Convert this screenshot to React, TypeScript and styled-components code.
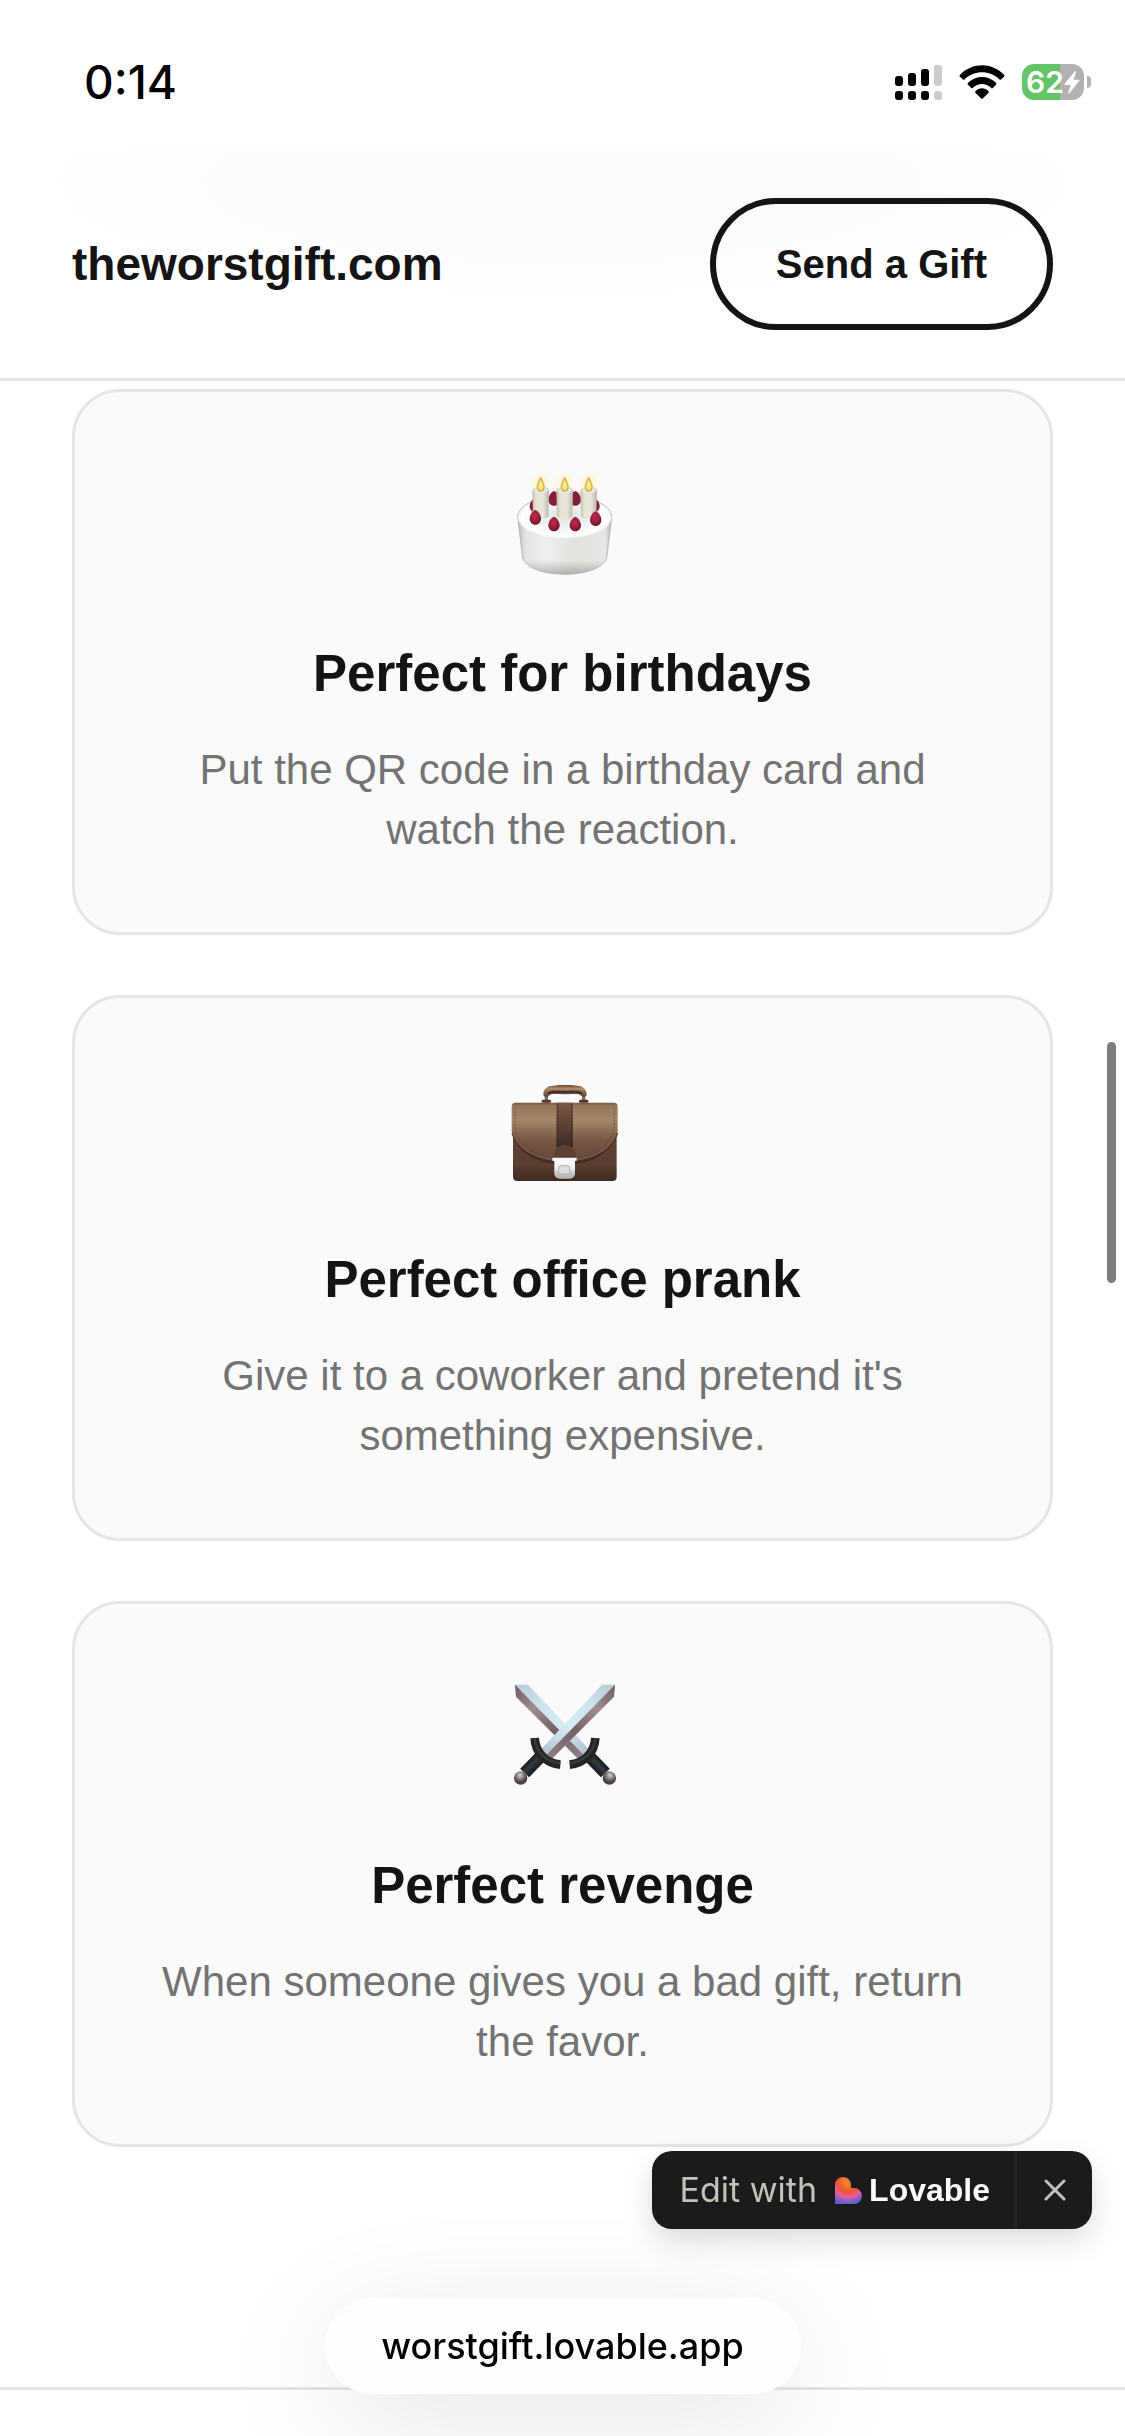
import React from "react";
import styled, { createGlobalStyle } from "styled-components";

const sans = `"Liberation Sans", Arial, Helvetica, sans-serif`;
const system = `Inter, Roboto, sans-serif`;

const GlobalStyle = createGlobalStyle`
  *, *::before, *::after { box-sizing: border-box; }
  body { margin: 0; background: #fff; color: #141414; font-family: ${sans}; }
  h2, p { margin: 0; }
`;

const Page = styled.div`
  display: flex;
  flex-direction: column;
  min-height: 100vh;
`;

const StatusBar = styled.div`
  display: flex;
  align-items: center;
  justify-content: space-between;
  height: 150px;
  padding: 14px 34px 0 84px;
  color: #000;
  font-family: ${system};
`;

const Clock = styled.time`
  font-size: 46px;
  font-weight: 500;
  line-height: 48px;
`;

const StatusIcons = styled.div`
  display: flex;
  align-items: center;
  gap: 17px;
`;

const Battery = styled.div`
  display: flex;
  align-items: center;
  gap: 3px;
`;

const BatteryBody = styled.div<{ $level: number }>`
  display: flex;
  align-items: center;
  justify-content: center;
  width: 62px;
  height: 36px;
  border-radius: 12px;
  color: #fff;
  font-size: 30px;
  font-weight: 600;
  line-height: 36px;
  background: linear-gradient(
    to right,
    #65c466 ${(p) => p.$level}%,
    #b2b2b2 ${(p) => p.$level}%
  );
`;

const BatteryNub = styled.span`
  width: 4px;
  height: 12px;
  border-radius: 0 6px 6px 0;
  background: #b2b2b2;
`;

const Header = styled.header`
  display: flex;
  align-items: center;
  justify-content: space-between;
  padding: 48px 72px;
  border-bottom: 3px solid #e5e5e5;
  background: radial-gradient(ellipse 48% 52% at 50% 15%, #fcfcfc 60%, #fff 100%);
`;

const Brand = styled.a`
  color: #141414;
  font-size: 46px;
  font-weight: 700;
  line-height: 72px;
  text-decoration: none;
`;

const SendButton = styled.button`
  padding: 30px 60px;
  border: 6px solid #141414;
  border-radius: 66px;
  background: transparent;
  color: #141414;
  font-family: ${sans};
  font-size: 40px;
  font-weight: 700;
  line-height: 60px;
`;

const CardList = styled.main`
  display: flex;
  flex-direction: column;
  gap: 60px;
  padding: 8px 72px 240px;
`;

const Card = styled.article`
  display: flex;
  flex-direction: column;
  align-items: center;
  padding: 72px;
  border: 3px solid #e5e5e5;
  border-radius: 48px;
  background: #fafafa;
  text-align: center;
`;

const CardIcon = styled.svg`
  width: 120px;
  height: 120px;
  margin-bottom: 48px;
`;

const CardTitle = styled.h2`
  margin-bottom: 24px;
  font-size: 51px;
  font-weight: 700;
  line-height: 84px;
`;

const CardText = styled.p`
  max-width: 831px;
  color: #737373;
  font-size: 42px;
  line-height: 60px;
`;

const NextSection = styled.section`
  flex: 1;
  min-height: 49px;
  border-top: 3px solid #e5e5e5;
`;

const ScrollThumb = styled.div`
  position: fixed;
  top: 1042px;
  right: 9px;
  width: 9px;
  height: 241px;
  border-radius: 5px;
  background: #7d7d7d;
`;

const EditBadge = styled.aside`
  position: fixed;
  right: 33px;
  bottom: 207px;
  display: flex;
  height: 78px;
  border-radius: 20px;
  background: #1b1b1b;
  box-shadow: 0 12px 30px rgba(0, 0, 0, 0.14);
  font-family: ${system};
`;

const EditLink = styled.a`
  display: flex;
  align-items: center;
  padding: 0 24px 0 28px;
  color: #c5c1ba;
  font-size: 34px;
  line-height: 48px;
  text-decoration: none;
`;

const LovableMark = styled.svg`
  width: 27px;
  height: 27px;
  margin: 0 7px 0 18px;
`;

const LovableName = styled.strong`
  color: #fcfbf8;
  font-size: 32px;
  font-weight: 700;
  font-family: ${sans};
`;

const CloseButton = styled.button`
  display: flex;
  align-items: center;
  justify-content: center;
  width: 78px;
  padding: 0;
  border: 0;
  border-left: 3px solid #242424;
  background: transparent;
  color: #c5c1ba;
`;

const AddressPill = styled.button`
  position: fixed;
  bottom: 42px;
  left: 50%;
  width: 476px;
  height: 96px;
  margin-left: -238px;
  padding: 0;
  border: 0;
  border-radius: 48px;
  background: #fefefd;
  box-shadow: 0 24px 120px rgba(0, 0, 0, 0.11);
  color: #000;
  font-family: ${system};
  font-size: 36px;
  font-weight: 500;
  line-height: 48px;
`;

const Signal = () => (
  <svg width="47" height="35" viewBox="0 0 47 35" aria-hidden="true">
    <rect x="0" y="11" width="8" height="10" rx="3" />
    <rect x="13" y="8" width="8" height="13" rx="3" />
    <rect x="26" y="4" width="8" height="17" rx="3" />
    <rect x="39" y="0" width="8" height="21" rx="3" fill="#ccc" />
    <rect x="0" y="26" width="8" height="9" rx="3" />
    <rect x="13" y="26" width="8" height="9" rx="3" />
    <rect x="26" y="26" width="8" height="9" rx="3" />
    <rect x="39" y="26" width="8" height="9" rx="3" fill="#ccc" />
  </svg>
);

const Wifi = () => (
  <svg width="46" height="34" viewBox="0 0 138 102" aria-hidden="true">
    <path d="M3 29C40-9 98-9 135 29q3 3 0 6l-8 8q-3 3-6 0C92 15 46 15 17 43q-3 3-6 0l-8-8q-3-3 0-6Z" />
    <path d="M27 53c24-23 60-23 84 0q3 3 0 6l-9 9q-3 3-6 0c-15-15-39-15-54 0q-3 3-6 0l-9-9q-3-3 0-6Z" />
    <path d="M50 78c11-11 27-11 38 0q3 3 0 6L72 100q-3 3-6 0L50 84q-3-3 0-6Z" />
  </svg>
);

const Bolt = () => (
  <svg width="16" height="23" viewBox="0 0 45 66" aria-hidden="true">
    <path d="M31 1 2 36q-3 4 2 4h15l-7 22q-1 5 3 2l28-35q3-4-2-4H27l7-21q0-5-3-3Z" fill="#fff" />
  </svg>
);

const berry = (x: number, y: number, dark = false) => (
  <path
    key={`${x}-${y}`}
    d={`M${x} ${y - 22}c9 3 17 16 17 26s-7 18-17 18-17-8-17-18 8-23 17-26Z`}
    fill={dark ? "#831e36" : "url(#berry)"}
  />
);

const Cake = () => (
  <CardIcon viewBox="38 42 360 360" role="img" aria-label="Birthday cake">
    <defs>
      <linearGradient id="cakeSide">
        <stop offset="0" stopColor="#b9b8b5" />
        <stop offset=".08" stopColor="#e5e4e2" />
        <stop offset=".3" stopColor="#efeeed" />
        <stop offset=".6" stopColor="#e3e2df" />
        <stop offset=".93" stopColor="#e8e7e5" />
        <stop offset="1" stopColor="#b5b3b0" />
      </linearGradient>
      <linearGradient id="cakeShade" x2="0" y2="1">
        <stop offset=".75" stopColor="#8c8984" stopOpacity="0" />
        <stop offset="1" stopColor="#8c8984" stopOpacity=".55" />
      </linearGradient>
      <radialGradient id="cakeTop">
        <stop offset="0" stopColor="#dfe2e5" />
        <stop offset=".6" stopColor="#f2f3f4" />
        <stop offset=".9" stopColor="#fff" />
        <stop offset="1" stopColor="#f4f3f2" />
      </radialGradient>
      <linearGradient id="candle">
        <stop offset="0" stopColor="#bdb9a9" />
        <stop offset=".22" stopColor="#e6e3d5" />
        <stop offset=".65" stopColor="#e8e5d9" />
        <stop offset="1" stopColor="#b9b5a6" />
      </linearGradient>
      <radialGradient id="glow">
        <stop offset="0" stopColor="#fff0a8" stopOpacity=".8" />
        <stop offset="1" stopColor="#fff4b5" stopOpacity="0" />
      </radialGradient>
      <radialGradient id="berry" cx=".45" cy=".4">
        <stop offset="0" stopColor="#bd294c" />
        <stop offset=".7" stopColor="#9d1f3d" />
        <stop offset="1" stopColor="#7d182f" />
      </radialGradient>
    </defs>
    <path d="M82 203 97 325c11 31 68 48 126 48s116-17 126-48l15-122Z" fill="url(#cakeSide)" />
    <path
      d="M82 203 97 325c11 31 68 48 126 48s116-17 126-48l15-122Z"
      fill="url(#cakeShade)"
      stroke="#a9a7a3"
      strokeWidth="2"
    />
    <ellipse cx="223" cy="201" rx="141" ry="64" fill="url(#cakeTop)" />
    <path d="M82 201c0-36 62-64 141-64s141 28 141 64" fill="none" stroke="#bdbcba" strokeWidth="3" />
    {[[135, 165], [191, 145], [255, 145], [311, 165]].map(([x, y]) => berry(x, y, true))}
    {[151, 223, 295].map((x) => (
      <g key={x}>
        <circle cx={x} cy="96" r="34" fill="url(#glow)" />
        <path d={`M${x - 25} 123c2-18 48-18 50 0l-2 75c-4 11-42 11-46 0Z`} fill="url(#candle)" />
        <ellipse cx={x} cy="121" rx="22" ry="9" fill="#e8e7e4" />
        <path d={`M${x} 80c6 9 12 24 12 31 0 9-5 14-12 14s-12-5-12-14c0-7 6-22 12-31Z`} fill="#d0aa3a" />
        <path d={`M${x} 88c5 9 8 16 8 23 0 6-3 10-8 10s-8-4-8-10c0-7 3-14 8-23Z`} fill="#f7e685" />
      </g>
    ))}
    {[[135, 202], [191, 222], [255, 222], [316, 206]].map(([x, y]) => berry(x, y))}
  </CardIcon>
);

const Briefcase = () => (
  <CardIcon viewBox="38 30 360 360" role="img" aria-label="Briefcase">
    <defs>
      <linearGradient id="leather" x2="0" y2="1">
        <stop offset="0" stopColor="#765640" />
        <stop offset=".06" stopColor="#98785d" />
        <stop offset=".3" stopColor="#a48669" />
        <stop offset=".65" stopColor="#765643" />
        <stop offset="1" stopColor="#64473a" />
      </linearGradient>
      <linearGradient id="caseBack" x2="0" y2="1">
        <stop offset=".3" stopColor="#5f4234" />
        <stop offset=".75" stopColor="#593e31" />
        <stop offset="1" stopColor="#402a21" />
      </linearGradient>
      <linearGradient id="strap" x2="0" y2="1">
        <stop offset="0" stopColor="#7b5944" />
        <stop offset="1" stopColor="#3c2a22" />
      </linearGradient>
      <linearGradient id="grip" x2="0" y2="1">
        <stop offset="0" stopColor="#62452f" />
        <stop offset=".3" stopColor="#b18c6d" />
        <stop offset="1" stopColor="#5a3e2e" />
      </linearGradient>
      <linearGradient id="lock" x2="0" y2="1">
        <stop offset="0" stopColor="#fff" />
        <stop offset=".6" stopColor="#e2e3e6" />
        <stop offset="1" stopColor="#b5b5b8" />
      </linearGradient>
    </defs>
    <path d="M168 128v-20M280 128v-20" stroke="#766e68" strokeWidth="10" />
    <path d="M158 124h20M270 124h20" stroke="#553a2b" strokeWidth="9" strokeLinecap="round" />
    <path d="M159 105c0-25 18-30 65-30s65 5 65 30c-4 8-15 7-18 0-5-7-23-2-47-2s-42-5-47 2c-3 7-14 8-18 0Z" fill="url(#grip)" />
    <path d="M174 103c4-9 20-7 50-7s46-2 50 7" fill="none" stroke="#473126" strokeWidth="8" />
    <path d="M68 170h311v180q0 13-13 13H82q-14 0-14-13Z" fill="url(#caseBack)" />
    <path d="M68 218C86 277 148 309 223 309s137-32 156-91" fill="none" stroke="#432c22" strokeWidth="10" />
    <path d="M64 140q0-12 12-12h294q12 0 12 12v72c-12 56-74 92-159 92S76 268 64 212Z" fill="url(#leather)" />
    <path d="M66 214C80 268 140 301 223 301s143-33 157-87" fill="none" stroke="#7c5d4b" strokeWidth="3" />
    <path d="M74 142v68c14 50 67 84 149 84s135-34 149-84v-68" fill="none" stroke="#604333" strokeWidth="2" strokeDasharray="6 4" />
    <path d="M198 128h50v134h-50Z" fill="url(#strap)" />
    <path d="M202 132v125M244 132v125" stroke="#39271f" strokeWidth="2" strokeDasharray="6 4" />
    <path d="M189 297c0-28 13-42 34-42s34 14 34 42Z" fill="#5d4031" />
    <path d="M192 302h62v37q0 17-18 17h-26q-18 0-18-17Z" fill="url(#lock)" />
    <path d="M193 332h60v7q0 17-17 17h-26q-17 0-17-17Z" fill="#a9a9ac" opacity=".4" />
    <rect x="186" y="293" width="73" height="10" rx="2" fill="#f5f5f5" />
    <rect x="205" y="317" width="33" height="25" rx="7" fill="#dedee1" stroke="#b2b2b5" strokeWidth="3" />
  </CardIcon>
);

const Sword = () => (
  <>
    <path d="m374 74-3 36-187 187-32-29L335 74Z" fill="url(#steel)" />
    <path d="m374 74-3 36-187 187-14-14Z" fill="url(#bladeEdge)" />
    <path d="m156 284-53 55" stroke="url(#hilt)" strokeWidth="37" />
    <path d="M133 234c2 42 32 76 77 80" fill="none" stroke="#232423" strokeWidth="26" />
    <path d="M133 236c3 37 30 68 77 74" fill="none" stroke="#3b3c3a" strokeWidth="7" />
    <circle cx="91" cy="354" r="20" fill="url(#pommel)" />
  </>
);

const Swords = () => (
  <CardIcon viewBox="38 48 360 360" role="img" aria-label="Crossed swords">
    <defs>
      <linearGradient id="steel" x1="1" x2="0" y2="1">
        <stop offset="0" stopColor="#b4cad5" />
        <stop offset=".3" stopColor="#cee3ef" />
        <stop offset=".6" stopColor="#d9edf8" />
        <stop offset="1" stopColor="#a8bac5" />
      </linearGradient>
      <linearGradient id="bladeEdge" x1="1" x2="0" y2="1">
        <stop offset="0" stopColor="#705c61" />
        <stop offset=".3" stopColor="#a18c92" />
        <stop offset=".6" stopColor="#765f65" />
        <stop offset="1" stopColor="#8f8289" />
      </linearGradient>
      <linearGradient id="hilt" x1="0" y1="0" x2="1" y2="1">
        <stop offset=".2" stopColor="#111315" />
        <stop offset=".48" stopColor="#343a3f" />
        <stop offset=".8" stopColor="#111315" />
      </linearGradient>
      <radialGradient id="pommel" cx=".45" cy=".3">
        <stop offset="0" stopColor="#d2d6da" />
        <stop offset=".5" stopColor="#91858a" />
        <stop offset="1" stopColor="#4b3f43" />
      </radialGradient>
    </defs>
    <g transform="translate(448 0) scale(-1 1)">
      <Sword />
    </g>
    <Sword />
  </CardIcon>
);

const occasions = [
  {
    Icon: Cake,
    title: "Perfect for birthdays",
    text: "Put the QR code in a birthday card and watch the reaction.",
  },
  {
    Icon: Briefcase,
    title: "Perfect office prank",
    text: "Give it to a coworker and pretend it's something expensive.",
  },
  {
    Icon: Swords,
    title: "Perfect revenge",
    text: "When someone gives you a bad gift, return the favor.",
  },
];

export default function App() {
  return (
    <Page>
      <GlobalStyle />
      <StatusBar>
        <Clock>0:14</Clock>
        <StatusIcons>
          <Signal />
          <Wifi />
          <Battery>
            <BatteryBody $level={62}>
              62
              <Bolt />
            </BatteryBody>
            <BatteryNub />
          </Battery>
        </StatusIcons>
      </StatusBar>
      <Header>
        <Brand href="#">theworstgift.com</Brand>
        <SendButton type="button">Send a Gift</SendButton>
      </Header>
      <CardList>
        {occasions.map(({ Icon, title, text }) => (
          <Card key={title}>
            <Icon />
            <CardTitle>{title}</CardTitle>
            <CardText>{text}</CardText>
          </Card>
        ))}
      </CardList>
      <NextSection />
      <ScrollThumb />
      <AddressPill type="button">worstgift.lovable.app</AddressPill>
      <EditBadge>
        <EditLink href="#">
          Edit with
          <LovableMark viewBox="0 0 27 27" aria-hidden="true">
            <defs>
              <radialGradient id="heart" gradientUnits="userSpaceOnUse" cx="13" cy="5" r="24">
                <stop offset=".1" stopColor="#f0832f" />
                <stop offset=".42" stopColor="#ef5433" />
                <stop offset=".64" stopColor="#e65ca9" />
                <stop offset=".9" stopColor="#5a61cd" />
              </radialGradient>
            </defs>
            <path d="M0 27V8a8 8 0 0 1 16 0v3h3a8 8 0 0 1 0 16Z" fill="url(#heart)" />
          </LovableMark>
          <LovableName>Lovable</LovableName>
        </EditLink>
        <CloseButton type="button" aria-label="Close">
          <svg width="22" height="22" viewBox="0 0 22 22" aria-hidden="true">
            <path d="m2 2 18 18M20 2 2 20" stroke="currentColor" strokeWidth="3" strokeLinecap="round" />
          </svg>
        </CloseButton>
      </EditBadge>
    </Page>
  );
}
